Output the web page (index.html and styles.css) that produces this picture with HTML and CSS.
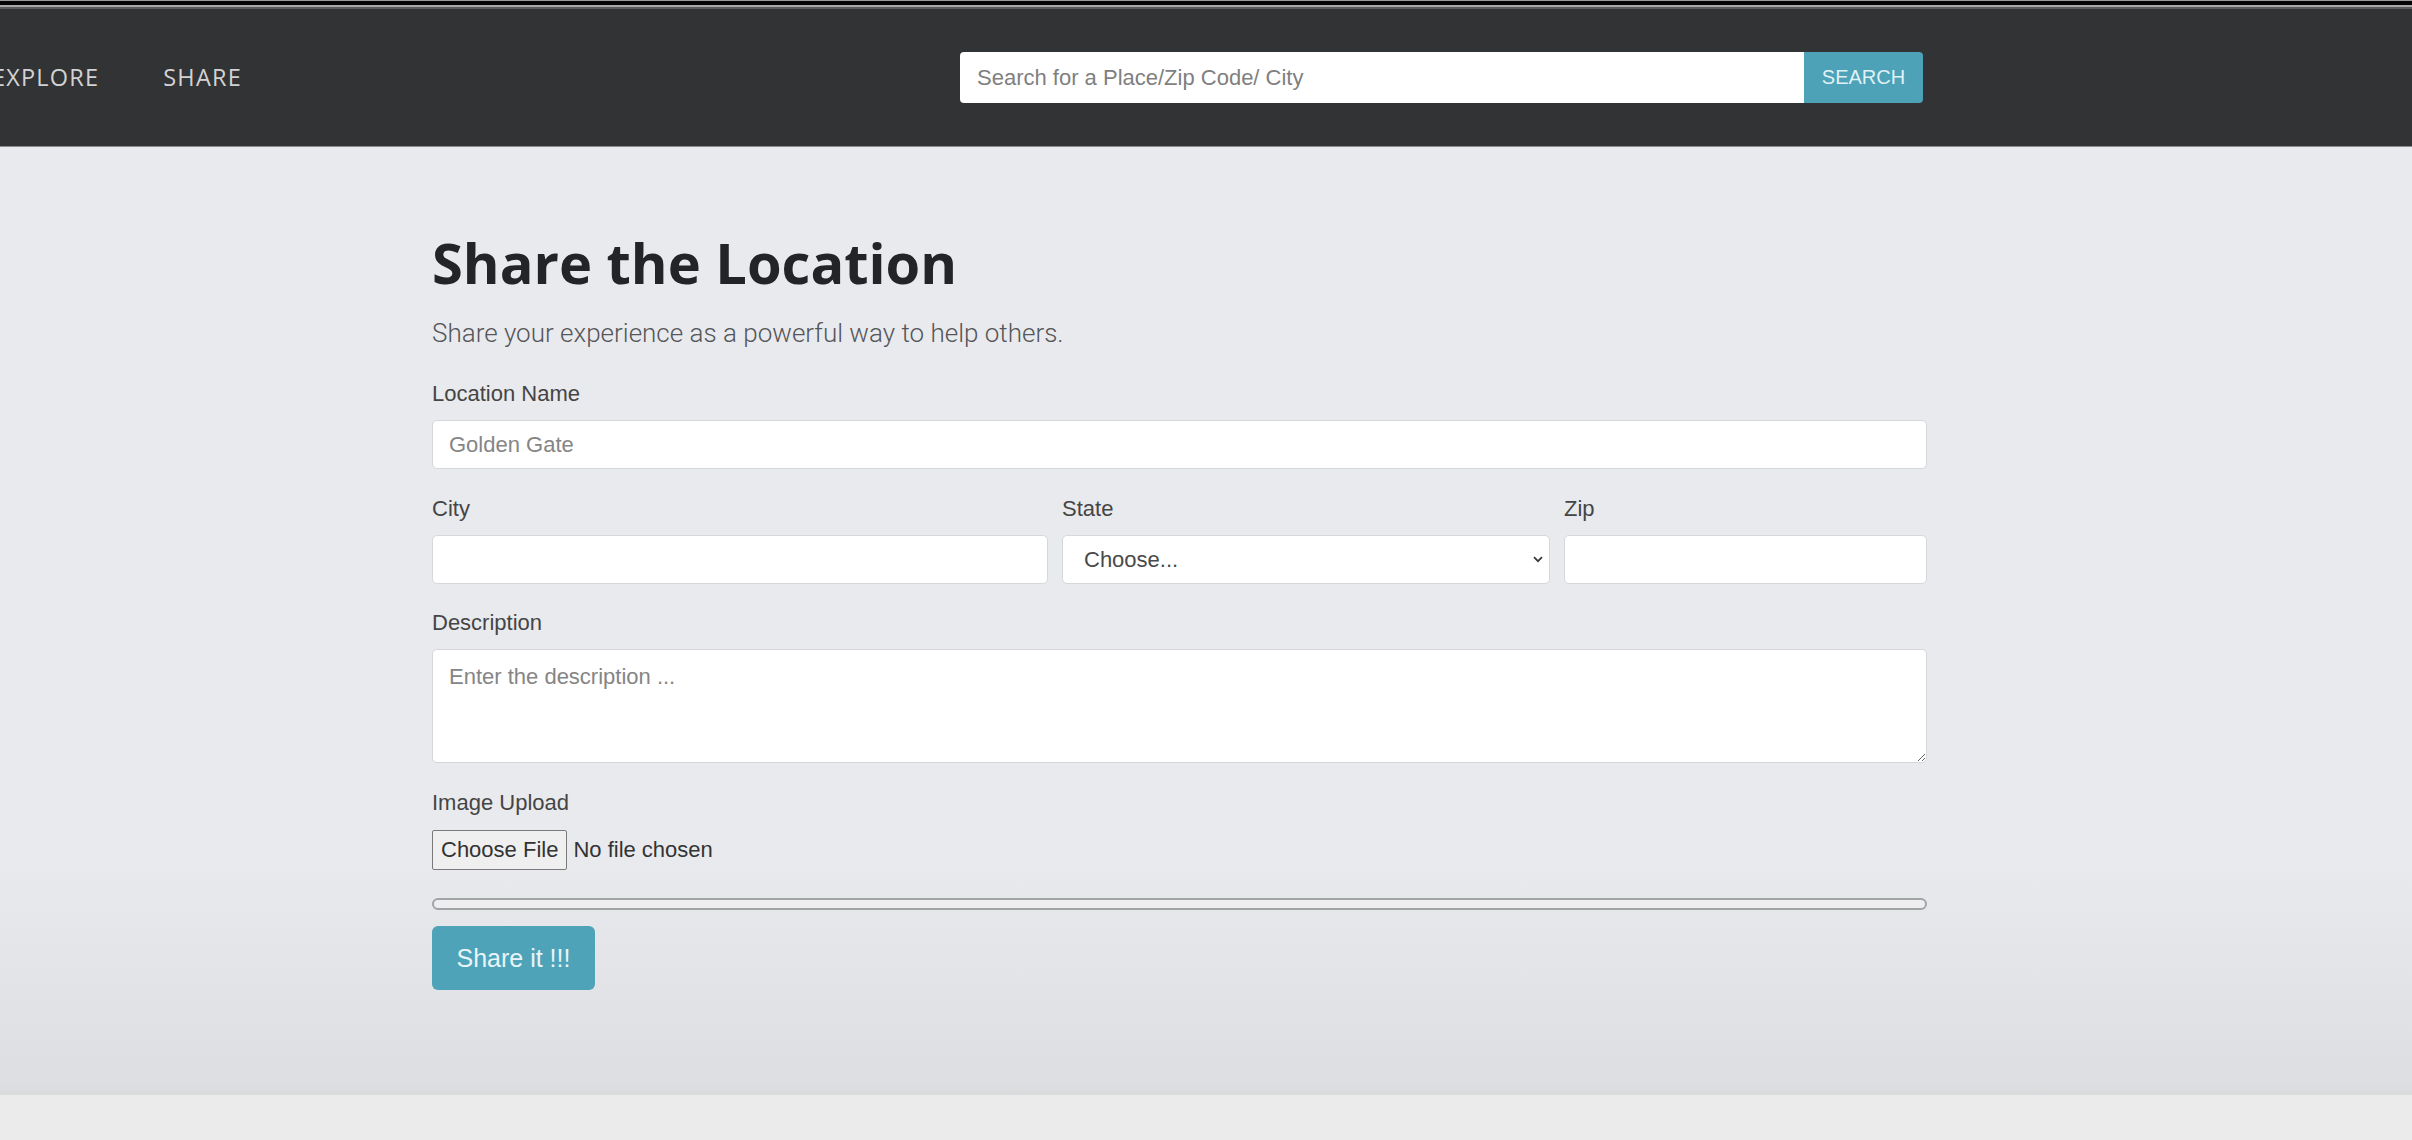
FILE: index.html
```html
<!DOCTYPE html>
<html lang="en">
<head>
<meta charset="utf-8">
<title>Share the Location</title>
<link rel="stylesheet" href="styles.css">
</head>
<body>
<div class="chrome"></div>
<header class="navbar">
  <nav class="nav-links">
    <a href="#" class="nav-link">EXPLORE</a>
    <a href="#" class="nav-link">SHARE</a>
  </nav>
  <form class="search">
    <input class="search-input" type="text" placeholder="Search for a Place/Zip Code/ City">
    <button class="search-btn" type="button">SEARCH</button>
  </form>
</header>
<main class="page">
  <form class="share-form">
    <h1 class="title">Share the Location</h1>
    <p class="lead">Share your experience as a powerful way to help others.</p>
    <div class="group">
      <label class="label">Location Name</label>
      <input class="control" type="text" placeholder="Golden Gate">
    </div>
    <div class="row">
      <div class="group">
        <label class="label">City</label>
        <input class="control" type="text">
      </div>
      <div class="group">
        <label class="label">State</label>
        <div class="select-wrap">
          <select class="control select"><option>Choose...</option></select>
          <svg class="chev" width="10" height="7" viewBox="0 0 10 7"><path d="M1 1.2 L5 5.2 L9 1.2" fill="none" stroke="#3a3a3a" stroke-width="1.8"/></svg>
        </div>
      </div>
      <div class="group">
        <label class="label">Zip</label>
        <input class="control" type="text">
      </div>
    </div>
    <div class="group">
      <label class="label">Description</label>
      <textarea class="control area" placeholder="Enter the description ..."></textarea>
    </div>
    <div class="group group-file">
      <label class="label">Image Upload</label>
      <input class="file" type="file">
    </div>
    <div class="progress"></div>
    <button class="submit" type="button">Share it !!!</button>
  </form>
</main>
<footer class="strip"></footer>
</body>
</html>
```
FILE: styles.css
```css
* { box-sizing: border-box; }
html, body { margin: 0; padding: 0; }
body {
  width: 2412px;
  height: 1140px;
  overflow: hidden;
  background: #ebebeb;
  font-family: "Liberation Sans", Arial, sans-serif;
}
.chrome {
  height: 9px;
  background: linear-gradient(to bottom, #9a9a9a 0, #9a9a9a 1px, #050505 1px, #050505 5px, #a8a8a8 5px, #a8a8a8 7px, #5a5a5a 7px, #5a5a5a 9px);
}
.navbar {
  height: 138px;
  background: #323335;
  border-bottom: 1px solid #8c8c8c;
  display: grid;
  grid-template-columns: 960px 963px;
  align-items: center;
}
.nav-links {
  display: flex;
  gap: 64px;
  margin-left: -8px;
  padding-bottom: 2px;
}
.nav-link {
  color: #d2d2d2;
  text-decoration: none;
  font-family: "Open Sans", sans-serif;
  font-size: 23.5px;
  letter-spacing: 1.2px;
}
.search {
  display: flex;
  height: 51px;
}
.search-input {
  flex: 1;
  height: 51px;
  border: none;
  border-radius: 4px 0 0 4px;
  padding: 0 17px;
  font-family: "Liberation Sans", Arial, sans-serif;
  font-size: 22px;
  color: #333;
  background: #fff;
}
.search-input::placeholder { color: #7f7f7f; }
.search-btn {
  width: 119px;
  height: 51px;
  border: none;
  border-radius: 0 4px 4px 0;
  background: #4ea2b7;
  color: #dff1f5;
  font-family: "Liberation Sans", Arial, sans-serif;
  font-size: 20px;
  padding: 0;
}
.page {
  height: 948px;
  background: linear-gradient(to bottom, #e9eaed 0, #e9eaed 75%, #dcdee1 99%, #d8dadc 100%);
  padding: 0 485px 0 432px;
}
.share-form {
  width: 1495px;
  padding-top: 80px;
}
.title {
  margin: 0;
  font-family: "Open Sans", sans-serif;
  font-weight: 700;
  font-size: 56px;
  line-height: 70px;
  color: #232427;
}
.lead {
  margin: 19px 0 27px;
  font-family: Roboto, sans-serif;
  font-weight: 300;
  font-size: 26px;
  line-height: 34px;
  color: #555659;
}
.group { margin-bottom: 23px; }
.label {
  display: block;
  font-size: 22px;
  line-height: 33px;
  color: #454545;
  margin-bottom: 10px;
}
.control {
  display: block;
  width: 100%;
  height: 49px;
  border: 1px solid #d6d7da;
  border-radius: 5px;
  background: #fff;
  padding: 0 16px;
  font-family: "Liberation Sans", Arial, sans-serif;
  font-size: 22px;
  color: #333;
}
.control::placeholder { color: #858585; }
.row {
  display: grid;
  grid-template-columns: 616px 488px 363px;
  column-gap: 14px;
}
.row .group { margin-bottom: 22px; }
.select-wrap { position: relative; }
.select {
  appearance: none;
  -webkit-appearance: none;
  padding-left: 21px;
  color: #4a4a4a;
}
.chev {
  position: absolute;
  right: 7px;
  top: 21px;
}
.area {
  height: 114px;
  padding: 14px 16px;
  resize: vertical;
}
.group-file { margin-bottom: 28px; }
.group-file .label { margin-bottom: 11px; }
.file {
  display: block;
  font-family: "Liberation Sans", Arial, sans-serif;
  font-size: 22px;
  color: #333;
  height: 40px;
}
.file::file-selector-button {
  height: 40px;
  padding: 0 8px;
  margin-right: 6px;
  border: 1px solid #7a7a7a;
  border-radius: 2px;
  background: #efefef;
  color: #333;
  font-family: "Liberation Sans", Arial, sans-serif;
  font-size: 22px;
}
.progress {
  height: 12px;
  border: 2px solid #a2a3a5;
  border-radius: 7px;
  background: #eeeef0;
  margin-bottom: 16px;
}
.submit {
  width: 163px;
  height: 64px;
  border: none;
  border-radius: 6px;
  background: #4fa3b9;
  color: #e8f5f8;
  font-family: "Liberation Sans", Arial, sans-serif;
  font-size: 25px;
  padding: 0;
}
.strip {
  height: 45px;
  background: #ebebeb;
}
```
